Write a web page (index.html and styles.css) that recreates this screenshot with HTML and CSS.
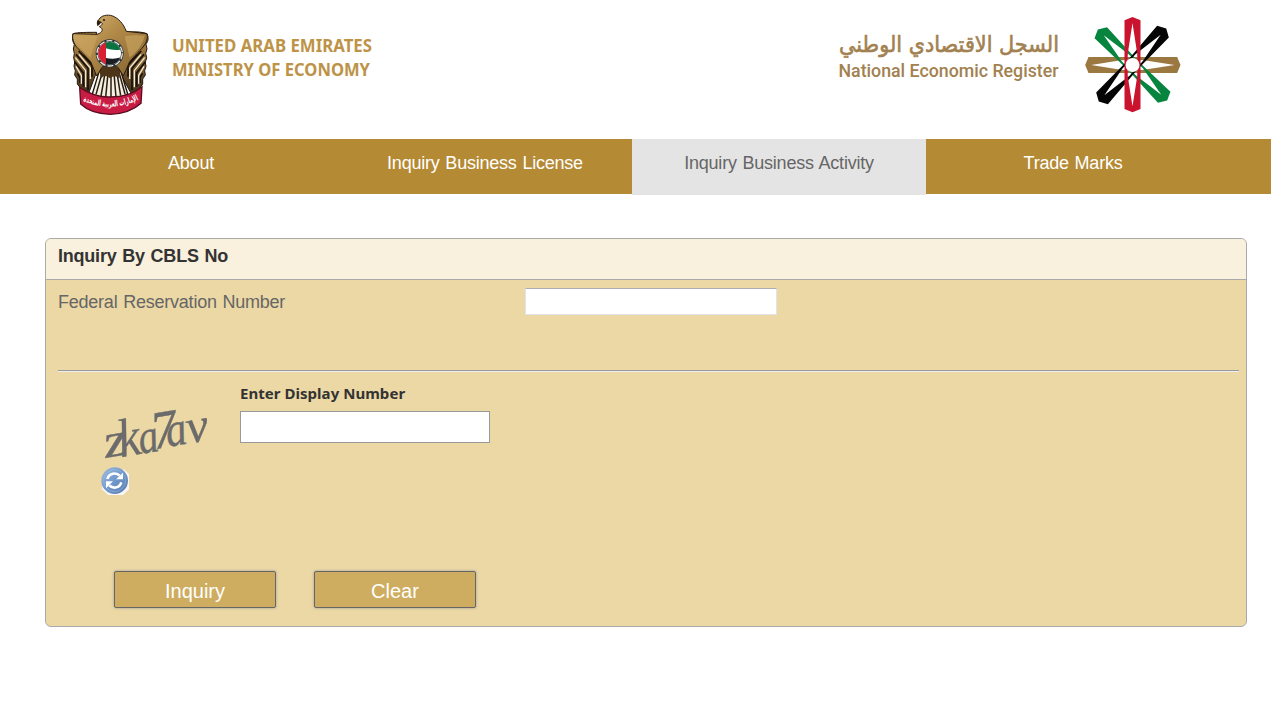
FILE: index.html
```
<!DOCTYPE html>
<html lang="en">
<head>
<meta charset="utf-8">
<title>National Economic Register</title>
<link rel="stylesheet" href="styles.css">
</head>
<body>
<header class="header">
  <div class="brand">
    <svg class="emblem" viewBox="0 0 300 345" width="100" height="115" aria-hidden="true">
      <defs>
        <linearGradient id="gold" x1="0" x2="1" y1="0" y2="1">
          <stop offset="0" stop-color="#d9b878"/><stop offset=".4" stop-color="#b38b4a"/><stop offset="1" stop-color="#80602e"/>
        </linearGradient>
        <linearGradient id="wing" x1="0" x2="0" y1="0" y2="1">
          <stop offset="0" stop-color="#b58c4a"/><stop offset=".45" stop-color="#8b6732"/><stop offset="1" stop-color="#3d2c18"/>
        </linearGradient>
      </defs>
      <path fill="url(#wing)" stroke="#21170e" stroke-width="3" d="M110 82C85 82 52 82 39 86C35 102 39 112 43 118L40 132L43 145L41 158L44 172L42 184L46 197L44 210L52 222L52 237L60 247L64 264L84 270L108 205Z"/>
      <path fill="url(#wing)" stroke="#21170e" stroke-width="3" d="M174 82C205 82 236 77 261 86C268 102 262 112 258 118L261 132L257 145L260 158L256 172L258 184L254 197L256 210L248 222L248 237L240 247L236 264L216 270L180 205Z"/>
      <g fill="none" stroke="#17120e" stroke-width="5">
        <path d="M48 148L84 190V255M56 138L96 181V215M44 170L70 204V245M52 205L60 218V234M70 150L105 186M252 148L216 190V255M244 138L204 181V215M256 170L230 204V245M248 205L240 218V234M230 150L195 186"/>
      </g>
      <g fill="none" stroke="#f3e9d4" stroke-width="4">
        <path d="M46 158L77 197V247M57 148L91 189V222M48 184L64 211V236M254 158L223 197V247M243 148L209 189V222M252 184L236 211V236"/>
      </g>
      <path fill="#f5efdf" stroke="#1b1510" stroke-width="4" d="M119 194L97 267Q147 294 203 267L181 194Z"/>
      <path fill="none" stroke="#2a1d12" stroke-width="4.5" d="M126 205L108 268M135 205L123 273M144 205L137 277M153 205V278M162 205L168 276M171 205L182 272M178 205L195 267"/>
      <path fill="#4d3518" d="M116 190Q148 174 183 190L178 220Q164 207 150 220Q135 206 123 220Z"/>
      <path fill="url(#gold)" stroke="#2a1b0c" stroke-width="3" d="M118 65C127 60 130 56 122 51C116 56 111 49 117 43C123 32 142 27 158 33C174 39 190 55 199 79L261 86C266 107 252 124 240 136L209 170L190 213L172 184H128L110 213L92 170L60 136C46 125 34 105 39 86L112 88C128 82 132 72 118 65Z"/>
      <path fill="#c8a35d" opacity=".7" d="M46 92Q80 89 112 94L91 158Q53 125 46 92M254 92Q224 88 194 94L209 158Q249 124 254 92"/>
      <path fill="#2b1c10" d="M113 45Q108 53 113 64Q120 59 124 52Z"/>
      <circle cx="132" cy="45" r="3" fill="#21160c"/>
      <circle cx="149" cy="145" r="42" fill="#29323b"/>
      <circle cx="149" cy="145" r="38" fill="none" stroke="#e8e4d8" stroke-width="4" stroke-dasharray="18 6"/>
      <clipPath id="disc"><circle cx="149" cy="145" r="34"/></clipPath>
      <g clip-path="url(#disc)">
        <path fill="#fff" d="M112 108H188V184H112Z"/><path fill="#0a7440" d="M112 108H188V132Q165 139 137 130Z"/><path fill="#191e22" d="M134 158Q164 166 188 155V184H134Z"/><path fill="#d92032" d="M112 108H138V184H112Z"/>
      </g>
      <path fill="#c91c44" stroke="#5b0d20" stroke-width="4" d="M59 247C91 269 121 277 151 276C186 276 219 268 246 245L243 295C220 316 191 327 151 328C113 327 84 318 62 297Z"/>
      <path id="ribbon" fill="none" d="M62 284Q147 328 243 281"/>
      <text class="ribbon-text" direction="rtl" text-anchor="middle"><textPath href="#ribbon" startOffset="50%" textLength="172" lengthAdjust="spacingAndGlyphs">الإمارات العربية المتحدة</textPath></text>
    </svg>
    <svg class="ministry" viewBox="0 0 220 65" width="220" height="65" role="img" aria-label="United Arab Emirates Ministry of Economy">
      <text x="12" y="26.5" textLength="200" lengthAdjust="spacingAndGlyphs">UNITED ARAB EMIRATES</text>
      <text x="12" y="50.5" textLength="198" lengthAdjust="spacingAndGlyphs">MINISTRY OF ECONOMY</text>
    </svg>
  </div>
  <div class="register">
    <svg class="register-name" viewBox="0 0 240 75" width="240" height="75" role="img" aria-label="National Economic Register">
      <text class="arabic" x="14" y="32" textLength="220" lengthAdjust="spacingAndGlyphs">السجل الاقتصادي الوطني</text>
      <text class="latin" x="13.500" y="57" textLength="220" lengthAdjust="spacingAndGlyphs">National Economic Register</text>
    </svg>
    <svg viewBox="0 0 345 345" width="115" height="115" aria-hidden="true">
      <defs>
        <path id="band" fill-rule="evenodd" d="M-24-134L0-144L24-134V132L0 142L-24 132ZM0-126L-14-35Q-17 0-14 35L0 124L14 35Q17 0 14-35Z"/>
        <path id="diagonal" fill-rule="evenodd" d="M-24-137L2-149L26-134L20 0L24 137L-2 149L-26 134L-20 0ZM2-124L-15-30V30L-2 124L15 30V-30Z"/>
      </defs>
      <g transform="translate(172.500 180)">
        <use href="#band" fill="#9b7840" transform="rotate(90)"/>
        <use href="#diagonal" fill="#07853f" transform="rotate(-45)"/>
        <use href="#diagonal" fill="#050505" transform="rotate(42)"/>
        <use href="#band" fill="#c9132f"/>
        <circle r="21" fill="#fff"/>
      </g>
    </svg>
  </div>
</header>
<nav class="nav">
  <a class="tab">About</a>
  <a class="tab">Inquiry Business License</a>
  <a class="tab tab-active">Inquiry Business Activity</a>
  <a class="tab">Trade Marks</a>
</nav>
<main class="panel">
  <h1 class="panel-title">Inquiry By CBLS No</h1>
  <div class="field-row">
    <label class="field-label" for="number">Federal Reservation Number</label>
    <input class="number-input" id="number" type="text">
  </div>
  <div class="captcha">
    <div class="captcha-visual">
      <svg class="captcha-code" viewBox="0 0 120 66" width="120" height="66" role="img" aria-label="Verification code">
        <g transform="translate(6 57) rotate(-10)">
          <text x="0" y="0" textLength="24" lengthAdjust="spacingAndGlyphs">z</text>
          <text class="tall" x="15" y="2" textLength="22" lengthAdjust="spacingAndGlyphs">k</text>
          <text x="35" y="2" textLength="20" lengthAdjust="spacingAndGlyphs">a</text>
          <text class="tall" x="49" y="0" textLength="26" lengthAdjust="spacingAndGlyphs">7</text>
          <text x="63" y="0" textLength="21" lengthAdjust="spacingAndGlyphs">a</text>
          <text x="84" y="0" textLength="22" lengthAdjust="spacingAndGlyphs">v</text>
        </g>
      </svg>
      <svg class="refresh" viewBox="0 0 84 84" width="28" height="28" aria-label="Refresh">
        <defs><linearGradient id="blue" x1="0" x2="1" y1="0" y2="1"><stop stop-color="#9dbce0"/><stop offset=".5" stop-color="#7198cb"/><stop offset="1" stop-color="#587aaf"/></linearGradient></defs>
        <path fill="#f8f7f7" d="M18 8H70L84 22V67L66 84H22L2 66Z"/>
        <circle cx="41" cy="41" r="40" fill="url(#blue)"/>
        <circle cx="41" cy="41" r="33" fill="none" stroke="#a6c1e2" stroke-width="2" opacity=".7"/>
        <path fill="none" stroke="#fff" stroke-width="8" d="M19 36C24 18 46 15 56 26M61 46C55 65 34 65 25 55"/>
        <path fill="#fff" d="M66 17V37H45ZM15 64V43H36Z"/>
      </svg>
    </div>
    <div class="captcha-entry">
      <label class="captcha-label" for="code">Enter Display Number</label>
      <input class="code-input" id="code" type="text">
    </div>
  </div>
  <div class="actions">
    <button class="button">Inquiry</button>
    <button class="button">Clear</button>
  </div>
</main>
</body>
</html>
```
FILE: styles.css
```
* { box-sizing: border-box; }
body { margin: 0; background: #fff; font-family: "Liberation Sans", Arial, sans-serif; color: #666; }
svg { display: block; overflow: visible; }
.header { height: 139px; padding: 5px 81px 0 60px; display: flex; justify-content: space-between; }
.brand, .register { display: flex; }
.ministry { margin-top: 20px; font: 700 17px "Noto Sans", "Open Sans", sans-serif; fill: #bd9348; }
.ribbon-text { font: bold 25px "DejaVu Sans", sans-serif; fill: #fff; }
.register-name { margin: 15px 10px 0 0; fill: #a28150; }
.arabic { font: 22px "DejaVu Sans", sans-serif; stroke: #a28150; stroke-width: .6px; }
.latin { font: 500 17.5px Roboto, sans-serif; }
.nav { height: 55px; padding: 0 51px 0 44px; background: #b58a35; display: grid; grid-template-columns: repeat(4, 294px); align-items: start; }
.tab { height: 55px; padding-top: 12px; text-align: center; color: #fff; font-size: 18px; line-height: 24px; word-spacing: 1px; letter-spacing: -.22px; }
.tab-active { height: 56px; background: #e4e4e4; color: #666; }
.panel { width: 1202px; height: 389px; margin: 44px 0 0 45px; background: #ecd8a5; border: 1px solid #aaa; border-radius: 6px; overflow: hidden; }
.panel-title { height: 41px; margin: 0; padding: 5px 12px; background: #f9f0dd; border-bottom: 1px solid #aaa; color: #333; font-size: 18px; line-height: 24px; word-spacing: 1px; letter-spacing: -.22px; }
.field-row { height: 92px; margin: 0 7px 0 12px; padding-top: 8px; display: grid; grid-template-columns: 467px 252px; align-items: start; border-bottom: 1px solid #eee; box-shadow: inset 0 -1px #999; }
.field-label { padding-top: 2px; font-size: 18px; line-height: 24px; word-spacing: 1px; letter-spacing: -.23px; }
.number-input { width: 252px; height: 27px; border: 1px solid #e2e3ea; border-top-color: #abadb3; background: #fff; }
.captcha { height: 199px; padding: 12px 0 0 54px; display: flex; gap: 20px; }
.captcha-visual { width: 120px; padding-top: 17px; }
.captcha-code { fill: #6b6b6b; stroke: #6b6b6b; stroke-width: .4px; font: italic 48px "Liberation Serif", serif; }
.tall { font-size: 54px; }
.refresh { margin-left: 1px; }
.captcha-entry { display: flex; flex-direction: column; }
.captcha-label { height: 27px; margin-top: -1px; margin-bottom: 1px; color: #333; font: bold 15px/20px "Noto Sans", "Open Sans", sans-serif; letter-spacing: .04px; }
.code-input { width: 250px; height: 32px; border: 1px solid #999; background: #fff; }
.actions { display: flex; gap: 38px; padding-left: 68px; }
.button { width: 162px; height: 37px; padding: 3px 0 0; border: 1px solid #666; border-radius: 2px; background: #cead60; box-shadow: 0 0 3px #9a9a9a; color: #fff; font: 20px "Liberation Sans", Arial, sans-serif; }
```
